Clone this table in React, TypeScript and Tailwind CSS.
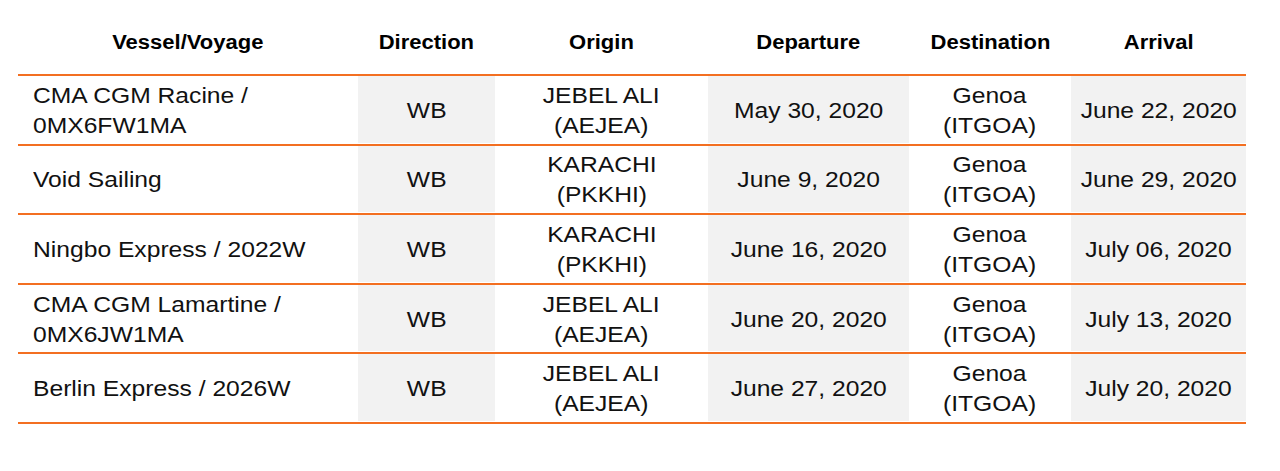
import React from "react";

type Row = {
  vessel: string[];
  direction: string;
  origin: string[];
  departure: string;
  destination: string[];
  arrival: string;
};

const rows: Row[] = [
  {
    vessel: ["CMA CGM Racine /", "0MX6FW1MA"],
    direction: "WB",
    origin: ["JEBEL ALI", "(AEJEA)"],
    departure: "May 30, 2020",
    destination: ["Genoa", "(ITGOA)"],
    arrival: "June 22, 2020",
  },
  {
    vessel: ["Void Sailing"],
    direction: "WB",
    origin: ["KARACHI", "(PKKHI)"],
    departure: "June 9, 2020",
    destination: ["Genoa", "(ITGOA)"],
    arrival: "June 29, 2020",
  },
  {
    vessel: ["Ningbo Express / 2022W"],
    direction: "WB",
    origin: ["KARACHI", "(PKKHI)"],
    departure: "June 16, 2020",
    destination: ["Genoa", "(ITGOA)"],
    arrival: "July 06, 2020",
  },
  {
    vessel: ["CMA CGM Lamartine /", "0MX6JW1MA"],
    direction: "WB",
    origin: ["JEBEL ALI", "(AEJEA)"],
    departure: "June 20, 2020",
    destination: ["Genoa", "(ITGOA)"],
    arrival: "July 13, 2020",
  },
  {
    vessel: ["Berlin Express / 2026W"],
    direction: "WB",
    origin: ["JEBEL ALI", "(AEJEA)"],
    departure: "June 27, 2020",
    destination: ["Genoa", "(ITGOA)"],
    arrival: "July 20, 2020",
  },
];

const headers = [
  { label: "Vessel/Voyage", w: "w-[340px]" },
  { label: "Direction", w: "w-[137px]" },
  { label: "Origin", w: "w-[213px]" },
  { label: "Departure", w: "w-[201px]" },
  { label: "Destination", w: "w-[162px]" },
  { label: "Arrival", w: "w-[175px]" },
];

function Cell({
  lines,
  w,
  gray,
  left,
}: {
  lines: string[];
  w: string;
  gray?: boolean;
  left?: boolean;
}) {
  return (
    <div
      className={`${w} flex items-center pt-[3px] ${left ? "justify-start pl-[15px]" : "justify-center"} ${gray ? "bg-[#f2f2f2]" : ""}`}
    >
      <div
        className={`scale-x-[1.12] ${left ? "origin-left text-left" : "origin-center text-center"} text-[22px] leading-[30px] text-[#111111]`}
      >
        {lines.map((l) => (
          <div key={l} className="whitespace-nowrap">
            {l}
          </div>
        ))}
      </div>
    </div>
  );
}

export default function App() {
  return (
    <div
      className="w-[1280px] h-[471px] bg-white pl-[18px]"
      style={{ fontFamily: '"Liberation Sans", Arial, sans-serif' }}
    >
      <div className="w-[1228px]">
        {/* Header */}
        <div className="flex h-[74px] items-center pt-[10px]">
          {headers.map((h) => (
            <div key={h.label} className={`${h.w} flex justify-center`}>
              <span className="inline-block scale-x-[1.1] text-[20px] font-bold text-black">
                {h.label}
              </span>
            </div>
          ))}
        </div>
        <div className="h-[2px] bg-[#f36f21]" />

        {/* Rows */}
        {rows.map((r) => (
          <div key={r.vessel.join(" ")}>
            <div className="flex h-[67.6px] pb-px">
              <Cell lines={r.vessel} w="w-[340px]" left />
              <Cell lines={[r.direction]} w="w-[137px]" gray />
              <Cell lines={r.origin} w="w-[213px]" />
              <Cell lines={[r.departure]} w="w-[201px]" gray />
              <Cell lines={r.destination} w="w-[162px]" />
              <Cell lines={[r.arrival]} w="w-[175px]" gray />
            </div>
            <div className="h-[2px] bg-[#f36f21]" />
          </div>
        ))}
      </div>
    </div>
  );
}
